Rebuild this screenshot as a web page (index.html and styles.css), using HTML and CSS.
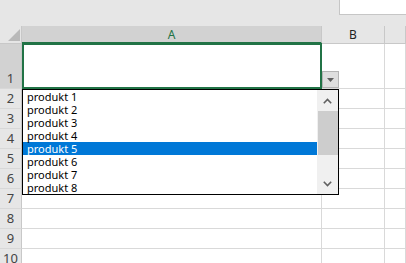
FILE: index.html
```html
<!DOCTYPE html>
<html lang="de">
<head>
  <meta charset="UTF-8" />
  <meta name="viewport" content="width=device-width, initial-scale=1.0" />
  <title>Dropdown-Liste</title>
  <link rel="stylesheet" href="styles.css">
</head>
<body>
  <div class="topbar">
    <div class="namebox"></div>
  </div>

  <div class="sheet">
    <div class="corner"><span class="corner-tri"></span></div>
    <div class="colhead selected">A</div>
    <div class="colhead">B</div>
    <div class="colhead"></div>

    <div class="rowhead selected">1</div>
    <div class="cell active"></div>
    <div class="cell"></div>
    <div class="cell"></div>

    <div class="rowhead">2</div><div class="cell"></div><div class="cell"></div><div class="cell"></div>
    <div class="rowhead">3</div><div class="cell"></div><div class="cell"></div><div class="cell"></div>
    <div class="rowhead">4</div><div class="cell"></div><div class="cell"></div><div class="cell"></div>
    <div class="rowhead">5</div><div class="cell"></div><div class="cell"></div><div class="cell"></div>
    <div class="rowhead">6</div><div class="cell"></div><div class="cell"></div><div class="cell"></div>
    <div class="rowhead">7</div><div class="cell"></div><div class="cell"></div><div class="cell"></div>
    <div class="rowhead">8</div><div class="cell"></div><div class="cell"></div><div class="cell"></div>
    <div class="rowhead">9</div><div class="cell"></div><div class="cell"></div><div class="cell"></div>
    <div class="rowhead">10</div><div class="cell"></div><div class="cell"></div><div class="cell"></div>

    <!-- Auswahlpfeil neben der aktiven Zelle -->
    <div class="dd-button">
      <svg width="7" height="4" viewBox="0 0 7 4"><path d="M0 0h7L3.5 4z" fill="#5f5f5f"/></svg>
    </div>

    <!-- aufgeklappte Liste -->
    <div class="dd-list">
      <ul class="dd-items">
        <li>produkt 1</li>
        <li>produkt 2</li>
        <li>produkt 3</li>
        <li>produkt 4</li>
        <li class="active">produkt 5</li>
        <li>produkt 6</li>
        <li>produkt 7</li>
        <li>produkt 8</li>
      </ul>
      <div class="scrollbar">
        <div class="scroll-arrow">
          <svg width="9" height="6" viewBox="0 0 9 6"><path d="M0.8 5.2L4.5 1.5l3.7 3.7" fill="none" stroke="#606060" stroke-width="1.6"/></svg>
        </div>
        <div class="scroll-track">
          <div class="scroll-thumb"></div>
        </div>
        <div class="scroll-arrow">
          <svg width="9" height="6" viewBox="0 0 9 6"><path d="M0.8 0.8l3.7 3.7 3.7-3.7" fill="none" stroke="#606060" stroke-width="1.6"/></svg>
        </div>
      </div>
    </div>
  </div>
</body>
</html>
```

FILE: styles.css
```css
body {
  margin: 0;
  width: 406px;
  height: 263px;
  overflow: hidden;
  background-color: #fff;
  font-family: 'Noto Sans', 'Open Sans', sans-serif;
  color: #222;
}

.topbar {
  height: 26px;
  background-color: #e6e6e6;
  display: flex;
  justify-content: flex-end;
}

.namebox {
  width: 67px;
  height: 15px;
  box-sizing: border-box;
  background-color: #fff;
  border-left: 1px solid #c6c6c6;
  border-bottom: 1px solid #c6c6c6;
}

.sheet {
  position: relative;
  display: grid;
  grid-template-columns: 22px 300px 63px 1fr;
  grid-template-rows: 18px 45px repeat(9, 20px);
}

.sheet > div {
  box-sizing: border-box;
}

.corner {
  background-color: #e6e6e6;
  border-right: 1px solid #c8c8c8;
  border-bottom: 1px solid #c8c8c8;
  display: flex;
  align-items: flex-end;
  justify-content: flex-end;
  padding: 0 1px 2px 0;
}

.corner-tri {
  width: 0;
  height: 0;
  border-style: solid;
  border-width: 0 0 12px 12px;
  border-color: transparent transparent #b9b9b9 transparent;
}

.colhead {
  background-color: #e6e6e6;
  border-right: 1px solid #c8c8c8;
  border-bottom: 1px solid #c8c8c8;
  display: flex;
  align-items: center;
  justify-content: center;
  font-size: 12px;
  color: #222;
}

.colhead.selected {
  background-color: #d2d2d2;
  color: #217346;
  border-bottom: 2px solid #217346;
}

.rowhead {
  background-color: #e6e6e6;
  border-right: 1px solid #c8c8c8;
  border-bottom: 1px solid #d8d8d8;
  display: flex;
  align-items: flex-end;
  justify-content: center;
  font-size: 13px;
  line-height: 15px;
  padding-bottom: 2px;
  color: #444;
}

.rowhead.selected {
  background-color: #d2d2d2;
}

.cell {
  border-right: 1px solid #d9d9d9;
  border-bottom: 1px solid #d9d9d9;
}

.cell.active {
  border: 2px solid #217346;
  margin-top: -1px;
}

.dd-button {
  position: absolute;
  left: 322px;
  top: 45px;
  width: 17px;
  height: 17px;
  background-color: #dedede;
  border: 1px solid #b4b4b4;
  display: flex;
  align-items: center;
  justify-content: center;
}

.dd-list {
  position: absolute;
  left: 22px;
  top: 63px;
  width: 317px;
  height: 106px;
  border: 1px solid #000;
  background-color: #fff;
  display: flex;
}

.dd-items {
  list-style: none;
  margin: 0;
  padding: 0;
  flex: 1;
  font-size: 11px;
  line-height: 13px;
  color: #000;
}

.dd-items li {
  height: 13px;
  padding-left: 4px;
}

.dd-items li.active {
  background-color: #0078d7;
  color: #fff;
}

.scrollbar {
  width: 21px;
  background-color: #f0f0f0;
  display: flex;
  flex-direction: column;
}

.scroll-arrow {
  height: 21px;
  display: flex;
  align-items: center;
  justify-content: center;
}

.scroll-track {
  flex: 1;
}

.scroll-thumb {
  height: 44px;
  margin: 0 0 0 1px;
  background-color: #cdcdcd;
}
```
